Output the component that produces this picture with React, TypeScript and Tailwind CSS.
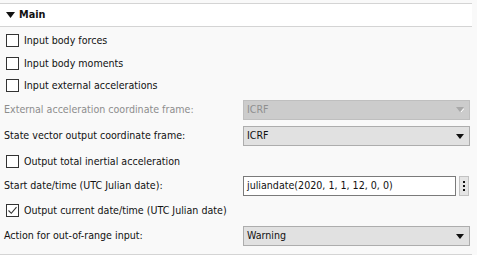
const font = "font-['DejaVu_Sans_Condensed','DejaVu_Sans',sans-serif] [font-stretch:condensed]";

function Checkbox({ checked = false, label }: { checked?: boolean; label: string }) {
  return (
    <div className="flex items-center gap-[5px] pl-[6px]">
      <div className="w-[13px] h-[13px] border border-[#333333] bg-white flex items-center justify-center">
        {checked && (
          <svg width="11" height="11" viewBox="0 0 11 11">
            <path d="M1.5 5.5 L4.3 8.3 L9.5 2.2" fill="none" stroke="#333" strokeWidth="1.1" />
          </svg>
        )}
      </div>
      <span className="text-[10.6px] text-[#111]">{label}</span>
    </div>
  );
}

function Arrow({ disabled = false }: { disabled?: boolean }) {
  return (
    <svg width="8" height="5" viewBox="0 0 8 5">
      <path d="M0 0 H8 L4 5 Z" fill={disabled ? '#a8a8a8' : '#111'} />
      {disabled && <path d="M5 5 L8 1.5" stroke="#fff" strokeWidth="1" />}
    </svg>
  );
}

function Select({ value, disabled = false }: { value: string; disabled?: boolean }) {
  return (
    <div
      className={`w-[227px] h-[20px] border flex items-center justify-between pl-[3px] pr-[5px] text-[10.6px] ${
        disabled
          ? 'bg-[#cccccc] border-[#bfbfbf] text-[#8f8f8f]'
          : 'bg-[#e1e1e1] border-[#adadad] text-[#111]'
      }`}
    >
      <span>{value}</span>
      <Arrow disabled={disabled} />
    </div>
  );
}

function Row({ h, label, disabled, children }: { h: string; label: string; disabled?: boolean; children: React.ReactNode }) {
  return (
    <div className={`flex items-center ${h}`}>
      <span className={`w-[243px] pl-[4px] text-[10.6px] ${disabled ? 'text-[#8d8d8d]' : 'text-[#111]'}`}>{label}</span>
      {children}
    </div>
  );
}

export default function App() {
  return (
    <div className={`w-[477px] h-[255px] bg-[#f9f9f9] overflow-hidden ${font}`}>
      {/* Section header */}
      <div className="mt-[3px] mr-[5px] h-[24px] bg-white border-y border-[#d4d4d4] flex items-center gap-[4px] pl-[6px]">
        <svg width="9" height="6" viewBox="0 0 9 6">
          <path d="M0 0 H9 L4.5 6 Z" fill="#111" />
        </svg>
        <span className="text-[10.8px] font-bold text-[#111]">Main</span>
      </div>

      <div className="pt-[2px]">
        <div className="h-[23px] flex items-center">
          <Checkbox label="Input body forces" />
        </div>
        <div className="h-[23px] flex items-center">
          <Checkbox label="Input body moments" />
        </div>
        <div className="h-[22px] flex items-center">
          <Checkbox label="Input external accelerations" />
        </div>
        <Row h="h-[25px]" label="External acceleration coordinate frame:" disabled>
          <Select value="ICRF" disabled />
        </Row>
        <Row h="h-[28px]" label="State vector output coordinate frame:">
          <Select value="ICRF" />
        </Row>
        <div className="h-[23px] flex items-center">
          <Checkbox label="Output total inertial acceleration" />
        </div>
        <Row h="h-[25px]" label="Start date/time (UTC Julian date):">
          <div className="flex items-center gap-[3px]">
            <div className="w-[213px] h-[20px] bg-white border border-[#7a7a7a] flex items-center pl-[3px] text-[10.6px] text-[#111]">
              juliandate(2020, 1, 1, 12, 0, 0)
            </div>
            <div className="w-[10px] h-[20px] bg-[#e5e5e5] border border-[#c2c2c2] flex flex-col items-center justify-center gap-[2px]">
              <div className="w-[2px] h-[2px] bg-[#111]" />
              <div className="w-[2px] h-[2px] bg-[#111]" />
              <div className="w-[2px] h-[2px] bg-[#111]" />
            </div>
          </div>
        </Row>
        <div className="h-[26px] flex items-center">
          <Checkbox checked label="Output current date/time (UTC Julian date)" />
        </div>
        <Row h="h-[24px]" label="Action for out-of-range input:">
          <Select value="Warning" />
        </Row>
      </div>

      <div className="mt-[6px] mr-[5px] border-t border-[#d4d4d4]" />
    </div>
  );
}
